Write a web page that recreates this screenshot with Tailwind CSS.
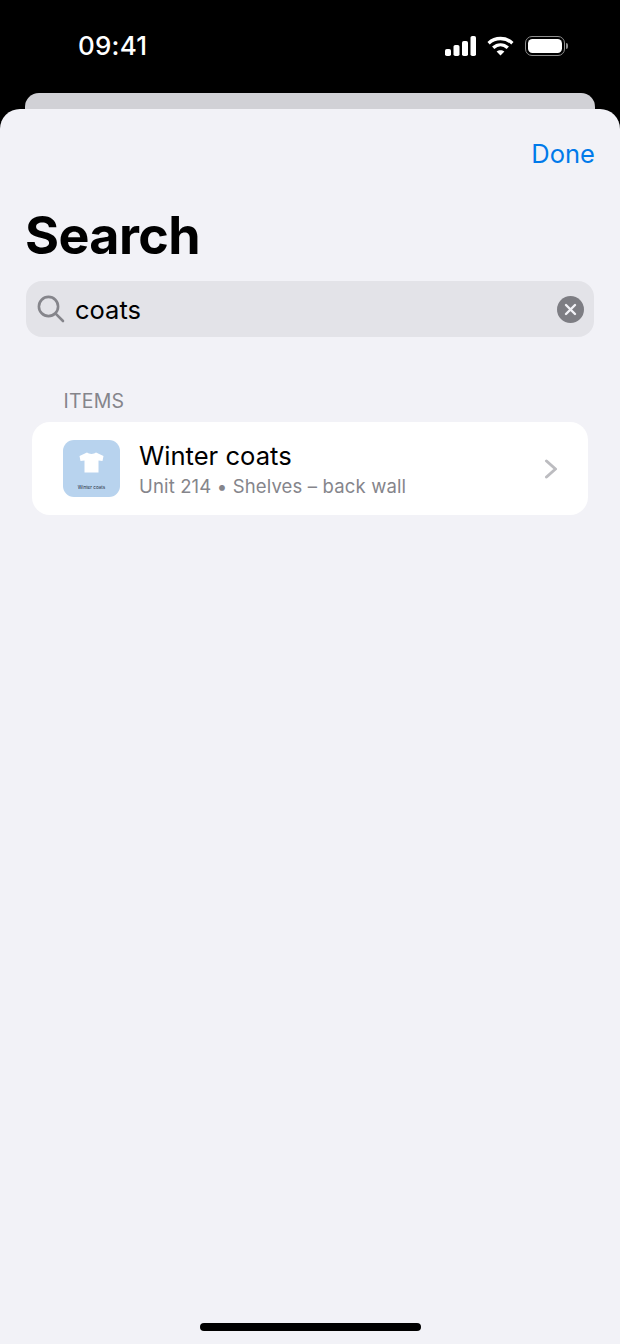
<!DOCTYPE html>
<html lang="en">
<head>
  <meta charset="UTF-8" />
  <meta name="viewport" content="width=device-width, initial-scale=1.0"/>
  <title>Search</title>
  <script src="https://cdn.jsdelivr.net/npm/@tailwindcss/browser@4"></script>
</head>
<body class="bg-black h-[1344px] w-[620px] overflow-hidden flex flex-col font-['Inter',sans-serif]">

  <!-- Status bar -->
  <header class="h-[93px] shrink-0 flex items-start justify-between pt-[29px] pl-[78px] pr-[52px] text-white">
    <span class="text-[26px] leading-[34px] font-medium tracking-[0.2px]">09:41</span>
    <div class="flex items-center mt-[7px]">
      <svg width="31" height="20" viewBox="0 0 31 20" fill="#fff">
        <rect x="0" y="13" width="6" height="7" rx="1.8"/>
        <rect x="8.5" y="9" width="6" height="11" rx="1.8"/>
        <rect x="17" y="5" width="6" height="15" rx="1.8"/>
        <rect x="25.5" y="0" width="5.5" height="20" rx="1.8"/>
      </svg>
      <svg class="ml-[11px]" width="27" height="20" viewBox="0 0 27 20" fill="none" stroke="#fff" stroke-width="3.4">
        <path d="M1.6 7.2 C8.4 1 18.6 1 25.4 7.2"/>
        <path d="M6.2 11.8 C10.6 7.9 16.4 7.9 20.8 11.8"/>
        <path d="M13.5 19.6 L9.6 15.6 C11.8 13.8 15.2 13.8 17.4 15.6 Z" fill="#fff" stroke="none"/>
      </svg>
      <div class="flex items-center gap-[1px] ml-[11px]">
        <div class="w-[40px] h-[20px] rounded-[7px] border-[1.5px] border-[#8e8e8e] p-[2px]">
          <div class="w-full h-full rounded-[4.5px] bg-white"></div>
        </div>
        <div class="w-[2px] h-[6px] rounded-r-full bg-[#8e8e8e]"></div>
      </div>
    </div>
  </header>

  <!-- Sheet behind -->
  <div class="h-[16px] shrink-0 mx-[25px] rounded-t-[14px] bg-[#d1d1d6]"></div>

  <!-- Sheet -->
  <main class="relative flex-1 rounded-t-[20px] bg-[#f2f2f7]">
    <div class="flex justify-end pt-[27px] pr-[25px]">
      <button class="text-[25.5px] leading-[36px] text-[#007aea]">Done</button>
    </div>

    <h1 class="mt-[33px] ml-[25px] text-[52px] leading-[62px] font-bold tracking-[-0.6px] text-black">Search</h1>

    <!-- Search field -->
    <div class="mt-[14px] mx-[26px] h-[56px] rounded-[16px] bg-[#e3e3e8] flex items-center pl-[11px] pr-[10px]">
      <svg width="28" height="28" viewBox="0 0 28 28" fill="none" stroke="#85858b" stroke-width="2.6" stroke-linecap="round">
        <circle cx="11.5" cy="11.5" r="9.6"/>
        <path d="M18.6 18.6 L26 26"/>
      </svg>
      <span class="ml-[10px] flex-1 text-[25.5px] leading-[34px] pt-[1px] text-black">coats</span>
      <div class="w-[27px] h-[27px] rounded-full bg-[#7d7d83] flex items-center justify-center">
        <svg width="13" height="13" viewBox="0 0 13 13" fill="none" stroke="#f2f2f7" stroke-width="2.4" stroke-linecap="round">
          <path d="M2 2 L11 11 M11 2 L2 11"/>
        </svg>
      </div>
    </div>

    <!-- Items -->
    <h2 class="mt-[51px] ml-[63.5px] text-[19.5px] leading-[26px] text-[#85858b] tracking-[0.2px]">ITEMS</h2>

    <div class="mt-[8px] mx-[32px] h-[93px] rounded-[18px] bg-white flex items-center pl-[31px] pr-[30px]">
      <div class="relative w-[57px] h-[57px] rounded-[11px] bg-[#b8d3ee] flex flex-col items-center">
        <svg class="mt-[12px]" width="25" height="21" viewBox="0 0 25 21" fill="#fff">
          <path d="M8 0.5 C10 2.4 15 2.4 17 0.5 L24.5 4 L23.5 9 L19.5 8.4 L19.5 20.5 L5.5 20.5 L5.5 8.4 L1.5 9 L0.5 4 Z"/>
        </svg>
        <span class="absolute bottom-[6px] text-[4.6px] leading-[6px] text-[#1c2a3a] whitespace-nowrap">Winter coats</span>
      </div>
      <div class="ml-[19px] flex-1">
        <div class="text-[25.6px] leading-[32px] text-black">Winter coats</div>
        <div class="mt-[2px] text-[18.5px] leading-[24px] text-[#85858b] tracking-[0.15px]">Unit 214 • Shelves – back wall</div>
      </div>
      <svg width="14" height="20" viewBox="0 0 14 20" fill="none" stroke="#bcbcc0" stroke-width="3" stroke-linecap="round" stroke-linejoin="round">
        <path d="M2.5 2 L11.5 10 L2.5 18"/>
      </svg>
    </div>

    <!-- Home indicator -->
    <div class="absolute bottom-[13px] left-[200px] w-[221px] h-[8px] rounded-full bg-black"></div>
  </main>
</body>
</html>
